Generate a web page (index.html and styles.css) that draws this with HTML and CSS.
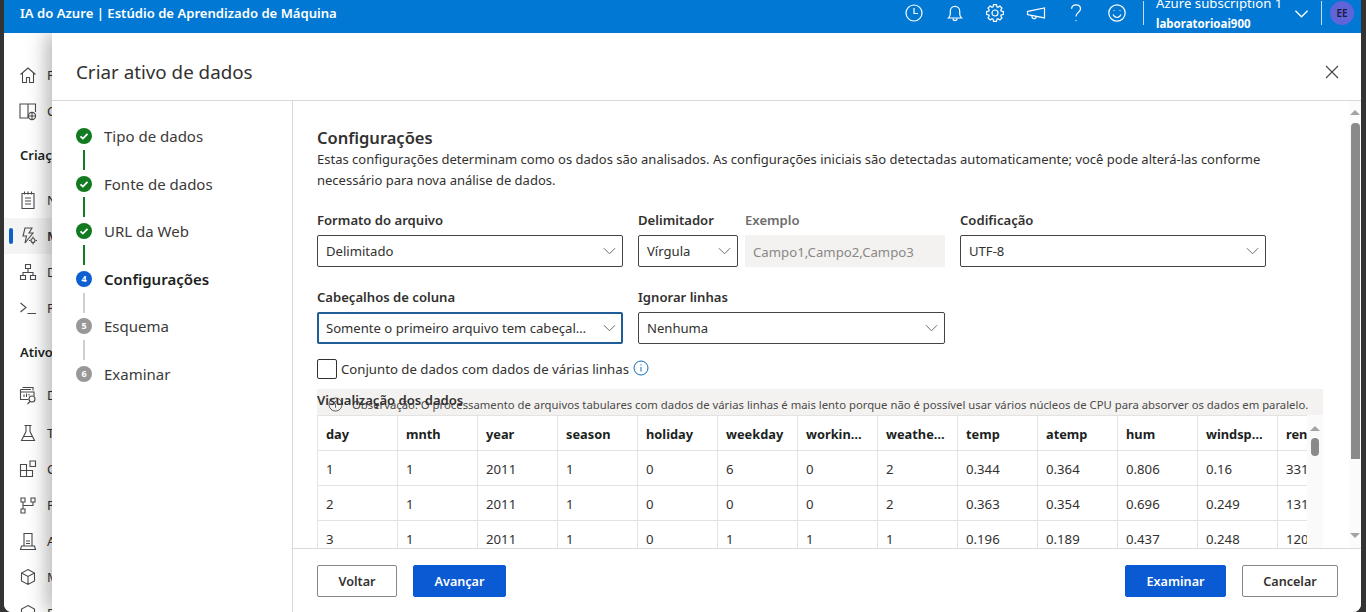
FILE: index.html
```html
<!DOCTYPE html>
<html lang="pt-BR">
<head>
<meta charset="utf-8">
<title>Criar ativo de dados</title>
<link rel="stylesheet" href="styles.css">
</head>
<body>
<div class="window">
  <header class="topbar">
    <div class="brand">IA do Azure | Estúdio de Aprendizado de Máquina</div>
    <div class="top-icons">
      <svg class="top-icon" viewBox="0 0 20 20"><circle cx="10" cy="10" r="8"/><path d="M10 5v5.500h4"/></svg>
      <svg class="top-icon" viewBox="0 0 20 20"><path d="M3.500 15h13c-1.400-1.300-1.800-2.600-1.800-4.500V8a4.700 4.700 0 0 0-9.400 0v2.500c0 1.900-.4 3.200-1.800 4.500z"/><path d="M8 15.500a2 2 0 0 0 4 0"/></svg>
      <svg class="top-icon" viewBox="0 0 20 20"><path d="M16.220 8.100 18.370 8.520V11.480L16.220 11.900 15.740 13.050 16.960 14.880 14.880 16.960 13.050 15.740 11.900 16.220 11.480 18.370H8.520L8.100 16.220 6.950 15.740 5.120 16.960 3.040 14.880 4.260 13.050 3.780 11.900 1.630 11.480V8.520L3.780 8.100 4.260 6.950 3.040 5.120 5.120 3.040 6.950 4.260 8.100 3.780 8.520 1.630H11.480L11.900 3.780 13.050 4.260 14.880 3.040 16.960 5.120 15.740 6.950z"/><circle cx="10" cy="10" r="3"/></svg>
      <svg class="top-icon" viewBox="0 0 20 20"><path d="M1.500 8.500v3l1.500.4 15.500 3V5L3 8.100z"/><path d="M6 12.600c-.3 2 .6 3 2 3s2.200-.6 2.200-2.200"/></svg>
      <svg class="top-icon" viewBox="0 0 20 20"><path d="M5.500 5.800C5.800 3.300 7.700 1.800 10 1.800c2.500 0 4.500 1.600 4.500 4 0 2-1.200 3-2.500 4-1.200.9-2 1.700-2 3.700"/><path d="M10 17.200v1"/></svg>
      <svg class="top-icon" viewBox="0 0 20 20"><circle cx="10" cy="10" r="8.200"/><path d="M6 11.500c1 2 2.400 3 4 3s3-1 4-3"/><path d="M7 7.200v.8M13 7.200v.8"/></svg>
    </div>
    <div class="top-sep"></div>
    <div class="account">
      <div class="account-sub">Azure subscription 1</div>
      <div class="account-name">laboratorioai900</div>
    </div>
    <svg class="top-chevron" viewBox="0 0 16 10"><path d="M1.500 1.500 8 8l6.500-6.500"/></svg>
    <div class="top-sep"></div>
    <div class="avatar">EE</div>
  </header>

  <div class="stage">
    <nav class="sidebar">
      <div class="nav-item"><svg class="nav-icon" viewBox="0 0 20 20"><path d="M2.500 9.500 10 3l7.500 6.500M4.500 8v9.500h4v-5h3v5h4V8"/></svg><span>Página inicial</span></div>
      <div class="nav-item"><svg class="nav-icon" viewBox="0 0 20 20"><path d="M10 17H2V3h8zM10 3h7.500v8M10 3v14"/><circle cx="14" cy="15" r="3.600"/><path d="M10.500 15h7M14 11.500v7"/></svg><span>Catálogo de modelos</span></div>
      <div class="nav-section nav-section-first">Criação</div>
      <div class="nav-item"><svg class="nav-icon" viewBox="0 0 20 20"><path d="M4 3.500h12v15H4zM7 8h6M7 11h6M7 14h6M6.500 1.500v3M10 1.500v3M13.500 1.500v3"/></svg><span>Notebooks</span></div>
      <div class="nav-item nav-item-active"><span class="nav-bar"></span><svg class="nav-icon" viewBox="0 0 20 20"><path d="M7 2h7l-3 5h4l-8 10 1.500-7H5z"/><circle cx="15" cy="14.500" r="2"/><path d="M15 10.500v1.500M15 17v1.500M11 14.500h1.500M17.500 14.500H19"/></svg><span>ML Automatizado</span></div>
      <div class="nav-item"><svg class="nav-icon" viewBox="0 0 20 20"><path d="M7.500 2.500h5v4h-5zM2.500 13.500h5v4h-5zM12.500 13.500h5v4h-5zM10 6.500v4M5 13.500v-3h10v3"/></svg><span>Designer</span></div>
      <div class="nav-item"><svg class="nav-icon" viewBox="0 0 20 20"><path d="M2.500 5 8 9.500 2.500 14M9.500 15.500H18"/></svg><span>Prompt flow</span></div>
      <div class="nav-section">Ativos</div>
      <div class="nav-item nav-item-gap"><svg class="nav-icon" viewBox="0 0 20 20"><path d="M4.500 2.500H15v3M2.500 4.500H13M2.500 4.500v10h8M2.500 7H16v4M6 12V9.500M8.500 12V8.500M11 10.500V9"/><circle cx="14" cy="14" r="3"/><path d="m12 16.500-2.500 2.500"/></svg><span>Dados</span></div>
      <div class="nav-item"><svg class="nav-icon" viewBox="0 0 20 20"><path d="M6.500 2.500h7M8 2.500v6L3.500 17.500h13L12 8.500v-6M5.500 13.500h9"/></svg><span>Trabalhos</span></div>
      <div class="nav-item"><svg class="nav-icon" viewBox="0 0 20 20"><path d="M2.500 5.500h6v12h-6zM8.500 11.500h6v6h-6zM2.500 11.500h6M12 2h5.500v5.500H12z"/></svg><span>Componentes</span></div>
      <div class="nav-item"><svg class="nav-icon" viewBox="0 0 20 20"><path d="M3 3h4v4H3zM13 3h4v4h-4zM3 14h4v4H3zM5 7v7M5 10.500h10V7"/></svg><span>Pipelines</span></div>
      <div class="nav-item"><svg class="nav-icon" viewBox="0 0 20 20"><path d="M6 2.500h8v12.500H6zM8 10h4M8 12.500h4M2.500 18.500h15l-1-3.500h-13z"/></svg><span>Ambientes</span></div>
      <div class="nav-item"><svg class="nav-icon" viewBox="0 0 20 20"><path d="M10 2.500 16.500 6v8L10 17.500 3.500 14V6zM3.500 6l6.500 3.500L16.500 6M10 9.500v8"/></svg><span>Modelos</span></div>
      <div class="nav-item"><svg class="nav-icon" viewBox="0 0 20 20"><path d="M10 2.500 16.500 6v8L10 17.500 3.500 14V6z"/></svg><span>Pontos de extremidade</span></div>
    </nav>

    <section class="modal">
      <div class="modal-head">
        <h1 class="modal-title">Criar ativo de dados</h1>
        <svg class="close" viewBox="0 0 14 14"><path d="M1 1l12 12M13 1 1 13"/></svg>
      </div>
      <div class="modal-body">
        <ol class="steps">
          <li class="step"><svg class="step-dot" viewBox="0 0 16 16"><circle class="dot-green" cx="8" cy="8" r="8"/><path class="dot-check" d="m4.500 8.300 2.400 2.300 4.600-4.800"/></svg><span>Tipo de dados</span></li>
          <li class="step-line step-line-done"></li>
          <li class="step"><svg class="step-dot" viewBox="0 0 16 16"><circle class="dot-green" cx="8" cy="8" r="8"/><path class="dot-check" d="m4.500 8.300 2.400 2.300 4.600-4.800"/></svg><span>Fonte de dados</span></li>
          <li class="step-line step-line-done"></li>
          <li class="step"><svg class="step-dot" viewBox="0 0 16 16"><circle class="dot-green" cx="8" cy="8" r="8"/><path class="dot-check" d="m4.500 8.300 2.400 2.300 4.600-4.800"/></svg><span>URL da Web</span></li>
          <li class="step-line step-line-done"></li>
          <li class="step step-current"><span class="step-num step-num-current">4</span><span>Configurações</span></li>
          <li class="step-line"></li>
          <li class="step"><span class="step-num">5</span><span>Esquema</span></li>
          <li class="step-line"></li>
          <li class="step"><span class="step-num">6</span><span>Examinar</span></li>
        </ol>

        <div class="pane">
          <div class="pane-main">
            <div class="content">
              <h2 class="content-title">Configurações</h2>
              <p class="content-desc">Estas configurações determinam como os dados são analisados. As configurações iniciais são detectadas automaticamente; você pode alterá-las conforme necessário para nova análise de dados.</p>

              <div class="form-row">
                <div class="field field-wide">
                  <label class="field-label">Formato do arquivo</label>
                  <div class="select"><span>Delimitado</span><svg class="chev" viewBox="0 0 14 8"><path d="M1 1l6 6 6-6"/></svg></div>
                </div>
                <div class="field-group">
                  <div class="field field-delim">
                    <label class="field-label">Delimitador</label>
                    <div class="select"><span>Vírgula</span><svg class="chev" viewBox="0 0 14 8"><path d="M1 1l6 6 6-6"/></svg></div>
                  </div>
                  <div class="field field-example">
                    <label class="field-label field-label-muted">Exemplo</label>
                    <div class="example">Campo1,Campo2,Campo3</div>
                  </div>
                </div>
                <div class="field field-wide">
                  <label class="field-label">Codificação</label>
                  <div class="select"><span>UTF-8</span><svg class="chev" viewBox="0 0 14 8"><path d="M1 1l6 6 6-6"/></svg></div>
                </div>
              </div>

              <div class="form-row form-row-second">
                <div class="field field-wide">
                  <label class="field-label">Cabeçalhos de coluna</label>
                  <div class="select select-focus"><span>Somente o primeiro arquivo tem cabeçal…</span><svg class="chev" viewBox="0 0 14 8"><path d="M1 1l6 6 6-6"/></svg></div>
                </div>
                <div class="field field-skip">
                  <label class="field-label">Ignorar linhas</label>
                  <div class="select"><span>Nenhuma</span><svg class="chev" viewBox="0 0 14 8"><path d="M1 1l6 6 6-6"/></svg></div>
                </div>
              </div>

              <div class="check-row">
                <span class="checkbox"></span>
                <span>Conjunto de dados com dados de várias linhas</span>
                <svg class="info" viewBox="0 0 16 16"><circle cx="8" cy="8" r="7"/><path d="M8 7v4.500M8 4.300v1.200"/></svg>
              </div>

              <div class="preview">
                <div class="preview-title">Visualização dos dados</div>
                <div class="notice">
                  <svg class="notice-icon" viewBox="0 0 16 16"><circle cx="8" cy="8" r="7"/><path d="M8 7v4.500M8 4.300v1.200"/></svg>
                  <span>Observação: O processamento de arquivos tabulares com dados de várias linhas é mais lento porque não é possível usar vários núcleos de CPU para absorver os dados em paralelo.</span>
                </div>
                <div class="table-wrap">
                  <div class="table-clip">
                    <table class="grid">
                      <thead>
                        <tr><th>day</th><th>mnth</th><th>year</th><th>season</th><th>holiday</th><th>weekday</th><th>workin…</th><th>weathe…</th><th>temp</th><th>atemp</th><th>hum</th><th>windsp…</th><th>rentals</th></tr>
                      </thead>
                      <tbody>
                        <tr><td>1</td><td>1</td><td>2011</td><td>1</td><td>0</td><td>6</td><td>0</td><td>2</td><td>0.344</td><td>0.364</td><td>0.806</td><td>0.16</td><td>331</td></tr>
                        <tr><td>2</td><td>1</td><td>2011</td><td>1</td><td>0</td><td>0</td><td>0</td><td>2</td><td>0.363</td><td>0.354</td><td>0.696</td><td>0.249</td><td>131</td></tr>
                        <tr><td>3</td><td>1</td><td>2011</td><td>1</td><td>0</td><td>1</td><td>1</td><td>1</td><td>0.196</td><td>0.189</td><td>0.437</td><td>0.248</td><td>120</td></tr>
                      </tbody>
                    </table>
                  </div>
                  <div class="table-scroll">
                    <span class="arrow-up"></span>
                    <span class="table-thumb"></span>
                  </div>
                </div>
              </div>
            </div>
            <div class="scrollbar">
              <span class="arrow-up"></span>
              <span class="thumb"></span>
              <span class="arrow-down"></span>
            </div>
          </div>
          <footer class="footer">
            <div class="btn-group">
              <button class="btn btn-back">Voltar</button>
              <button class="btn btn-primary btn-next">Avançar</button>
            </div>
            <div class="btn-group">
              <button class="btn btn-primary btn-review">Examinar</button>
              <button class="btn btn-cancel">Cancelar</button>
            </div>
          </footer>
        </div>
      </div>
    </section>
  </div>
</div>
</body>
</html>
```
FILE: styles.css
```css
* { box-sizing: border-box; }
html, body { margin: 0; height: 612px; overflow: hidden; }
body {
  background: #333;
  font-family: "Noto Sans", "Open Sans", sans-serif;
  font-size: 13px;
  color: #323130;
}
.window {
  width: 1357px;
  height: 612px;
  margin-left: 4px;
  display: flex;
  flex-direction: column;
  overflow: hidden;
  border-radius: 0 0 8px 8px;
  background: #fff;
}

/* top bar */
.topbar {
  position: relative;
  z-index: 2;
  flex: 0 0 33px;
  height: 33px;
  display: flex;
  align-items: flex-start;
  background: #0078d4;
  color: #fff;
  overflow: hidden;
}
.brand {
  margin-left: 16px;
  line-height: 26px;
  font-size: 13.1px;
  font-weight: 600;
  white-space: nowrap;
}
.top-icons {
  margin-left: auto;
  display: flex;
  gap: 20.6px;
  padding-top: 3px;
  margin-right: 16px;
}
.top-icon { width: 20px; height: 20px; fill: none; stroke: #fff; stroke-width: 1.2; }
.top-sep { width: 1px; height: 24px; margin-top: 1px; background: rgba(255,255,255,.75); }
.account { width: 134px; padding-left: 12px; margin-top: -7px; white-space: nowrap; }
.account-sub { font-size: 13.2px; line-height: 20px; }
.account-name { margin-top: 1px; font-size: 11.5px; font-weight: 700; line-height: 20px; }
.top-chevron { width: 15px; height: 10px; margin: 9px 12px 0 16px; fill: none; stroke: #fff; stroke-width: 1.4; }
.avatar {
  width: 24px;
  height: 24px;
  margin: 1px 7px 0 8px;
  border-radius: 50%;
  background: #5f64d8;
  color: #1b1a3c;
  font-size: 10px;
  font-weight: 600;
  line-height: 24px;
  text-align: center;
}

/* sidebar behind the panel */
.stage { position: relative; flex: 1; min-height: 0; overflow: hidden; }
.sidebar { width: 48px; height: 100%; padding-top: 24px; background: #fff; color: #323130; overflow: hidden; }
.nav-item {
  position: relative;
  height: 36px;
  display: flex;
  align-items: center;
  gap: 9px;
  padding-left: 14px;
  white-space: nowrap;
}
.nav-item-active { background: #f4f4f4; font-weight: 600; }
.nav-item-gap { margin-bottom: 2px; }
.nav-bar { position: absolute; left: 5px; top: 10px; width: 4px; height: 16px; border-radius: 2px; background: #0f5fc4; }
.nav-icon { flex: none; width: 20px; height: 20px; fill: none; stroke: #4a4a4a; stroke-width: 1.1; }
.nav-section { height: 51px; padding: 16px 0 0 16px; font-weight: 600; color: #201f1e; line-height: 20px; white-space: nowrap; }
.nav-section-first { height: 53px; }

/* panel */
.modal {
  position: absolute;
  left: 48px;
  right: 0;
  top: 0;
  bottom: 0;
  display: flex;
  flex-direction: column;
  background: #fff;
  box-shadow: -6px 0 18px rgba(0,0,0,.28);
}
.modal-head {
  flex: 0 0 68px;
  display: flex;
  align-items: center;
  justify-content: space-between;
  padding: 10px 22px 0 24px;
  border-bottom: 1px solid #d9d9d9;
}
.modal-title { margin: 0; font-size: 18.8px; font-weight: 400; color: #323130; }
.close { width: 14px; height: 14px; fill: none; stroke: #444; stroke-width: 1.1; }
.modal-body { flex: 1; min-height: 0; display: flex; }

/* steps */
.steps {
  flex: 0 0 241px;
  margin: 0;
  padding: 25px 0 0 24px;
  list-style: none;
  border-right: 1px solid #d9d9d9;
}
.step { height: 20px; display: flex; align-items: center; gap: 12px; font-size: 15px; color: #3b3a39; white-space: nowrap; }
.step-current { font-weight: 600; color: #201f1e; }
.step-dot { flex: none; width: 16px; height: 16px; }
.dot-green { fill: #127a20; }
.dot-check { fill: none; stroke: #fff; stroke-width: 1.8; }
.step-num {
  flex: none;
  width: 16px;
  height: 16px;
  border-radius: 50%;
  background: #989898;
  color: #fff;
  font-size: 9px;
  font-weight: 700;
  line-height: 16px;
  text-align: center;
}
.step-num-current { background: #0f5fd0; }
.step-line { width: 2px; height: 20px; margin: 3.8px 0 3.8px 7px; background: #cfcfcf; }
.step-line-done { background: #127a20; }

/* right pane */
.pane { flex: 1; min-width: 0; display: flex; flex-direction: column; }
.pane-main { flex: 1; min-height: 0; display: flex; }
.content { flex: 1; min-width: 0; padding: 26px 26px 0 24px; overflow: hidden; }
.content-title { margin: 0; font-size: 16.5px; line-height: 22px; font-weight: 600; color: #323130; }
.content-desc { margin: 0; font-size: 13px; line-height: 21px; color: #323130; }
.form-row { display: flex; gap: 15px; margin-top: 19px; }
.form-row-second { margin-top: 20px; }
.field-wide { flex: 0 0 306px; }
.field-group { flex: 0 0 307px; display: flex; gap: 7px; }
.field-delim { flex: 0 0 100px; }
.field-example { flex: 0 0 200px; }
.field-skip { flex: 0 0 307px; }
.field-label { display: block; height: 20px; margin-bottom: 5px; font-size: 13.1px; font-weight: 600; line-height: 20px; color: #323130; }
.field-label-muted { color: #6d6d6d; }
.select {
  height: 32px;
  display: flex;
  align-items: center;
  justify-content: space-between;
  padding: 0 5px 0 8px;
  border: 1px solid #444;
  border-radius: 2px;
  font-size: 13.1px;
  white-space: nowrap;
}
.select-focus { border: 2px solid #1f5d96; padding-left: 7px; padding-right: 4px; }
.chev { flex: none; width: 13px; height: 8px; margin-right: 1px; fill: none; stroke: #605e5c; stroke-width: 1; }
.example { height: 32px; padding-left: 8px; background: #f3f2f1; color: #8a8886; font-size: 13.2px; line-height: 34px; white-space: nowrap; }
.check-row { display: flex; align-items: center; height: 20px; margin-top: 15px; font-size: 13.2px; white-space: nowrap; }
.checkbox { flex: none; width: 20px; height: 20px; margin-right: 4px; border: 1px solid #323130; border-radius: 2px; }
.info { flex: none; width: 16px; height: 16px; margin: -3px 0 0 4px; fill: none; stroke: #0f6cbd; stroke-width: 1; }

/* preview */
.preview { position: relative; margin-top: 10px; }
.preview-title { position: absolute; left: 0; top: 1px; font-size: 13.1px; font-weight: 600; line-height: 20px; color: #323130; white-space: nowrap; }
.notice {
  height: 26px;
  display: flex;
  align-items: center;
  padding: 4px 0 0 11px;
  background: #f3f2f1;
  color: #4b4a48;
  font-size: 11.3px;
  white-space: nowrap;
  overflow: hidden;
}
.notice-icon { flex: none; width: 15px; height: 15px; margin-right: 9px; fill: none; stroke: #555; stroke-width: 1; }
.table-wrap { display: flex; }
.table-clip { flex: 1; min-width: 0; overflow: hidden; }
.grid { width: 1041px; table-layout: fixed; border-collapse: separate; border-spacing: 0; border-left: 1px solid #e3e3e3; font-size: 13.2px; }
.grid th, .grid td {
  width: 80px;
  padding: 1px 8px 0;
  border-right: 1px solid #e3e3e3;
  border-bottom: 1px solid #e3e3e3;
  text-align: left;
  white-space: nowrap;
  overflow: hidden;
}
.grid th { height: 36px; border-top: 1px solid #e3e3e3; font-size: 12.8px; font-weight: 700; color: #201f1e; }
.grid td { height: 35px; color: #323130; }
.table-scroll { flex: 0 0 16px; display: flex; flex-direction: column; align-items: center; padding-top: 11px; background: #fafafa; }
.table-thumb { width: 8px; height: 18px; margin-top: 7px; border-radius: 4px; background: #8a8a8a; }

/* page scrollbar */
.scrollbar { flex: 0 0 12px; display: flex; flex-direction: column; align-items: center; padding: 9px 0 10px; background: #fbfbfb; }
.thumb { width: 9px; height: 336px; margin-top: 8px; border-radius: 4px 4px 0 0; background: #8a8a8a; }
.arrow-up { flex: none; width: 0; height: 0; border-left: 5px solid transparent; border-right: 5px solid transparent; border-bottom: 5px solid #a3a3a3; }
.arrow-down { flex: none; width: 0; height: 0; margin-top: auto; border-left: 5px solid transparent; border-right: 5px solid transparent; border-top: 5px solid #a3a3a3; }

/* footer */
.footer {
  flex: 0 0 64px;
  display: flex;
  justify-content: space-between;
  align-items: flex-start;
  padding: 16px 23px 0 24px;
  border-top: 1px solid #d9d9d9;
}
.btn-group { display: flex; gap: 16px; }
.btn {
  height: 32px;
  padding: 0;
  border: 1px solid #8a8886;
  border-radius: 2px;
  background: #fff;
  color: #323130;
  font-family: inherit;
  font-size: 12.6px;
  font-weight: 600;
}
.btn-primary { border-color: #0a5bd3; background: #0a5bd3; color: #fff; }
.btn-back { width: 80px; }
.btn-next { width: 93px; }
.btn-review { width: 101px; }
.btn-cancel { width: 96px; }
```
